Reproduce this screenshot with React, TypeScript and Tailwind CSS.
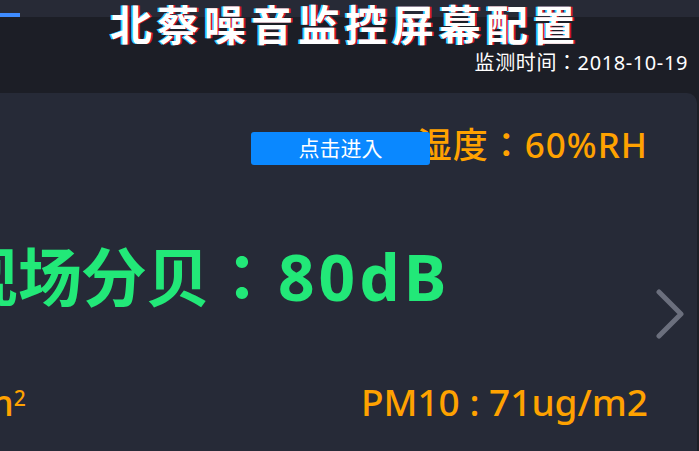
import { FC } from 'react';

const cjk = "font-['Noto_Sans','Noto_Sans_CJK_JP',sans-serif]";

const Chevron: FC = () => (
  <svg width="30" height="50" viewBox="0 0 30 50" fill="none">
    <path d="M4 3 L26 25 L4 47" stroke="#6b6f7d" strokeWidth="5" strokeLinecap="round" strokeLinejoin="round" />
  </svg>
);

export default function App() {
  return (
    <div className={`w-[699px] h-[451px] overflow-hidden bg-[#1c1e26] flex flex-col ${cjk}`}>
      {/* header */}
      <div className="relative h-[93px] shrink-0 bg-[linear-gradient(to_bottom,#272a36_17px,#1c1e26_17px)]">
        <div className="absolute left-0 top-[13px] h-[4px] w-[20px] bg-[#3f8cff]" />
        <div className="flex justify-center pr-[14px] pt-[4px]">
          <h1 className="text-[42px] leading-none font-bold text-white tracking-[5px] pl-[5px] [text-shadow:1.5px_0_#d0102a,-1.5px_0_#2ad0ff]">
            北蔡噪音监控屏幕配置
          </h1>
        </div>
        <div className="flex justify-end pr-[11px] mt-[7px]">
          <span className="text-[20px] leading-none text-white tracking-[0.6px]">监测时间：2018-10-19</span>
        </div>
      </div>

      {/* card */}
      <div className="relative flex-1 ml-[-260px] mr-[2px] rounded-tr-[10px] bg-[#262a37] flex flex-col">
        <div className="flex justify-end pr-[49px] pt-[34px] h-[80px]">
          <span className="text-[35px] leading-none font-medium text-[#ffa200] tracking-[1px]">湿度：60%RH</span>
        </div>
        <button className="absolute left-[511px] top-[39px] w-[179px] h-[33px] rounded-[3px] bg-[#0a88ff] text-white text-[21px] leading-none">
          点击进入
        </button>

        <div className="flex items-center pl-[214px] mt-[74px] h-[60px]">
          <span className="text-[64px] leading-none font-bold text-[#22e878] whitespace-nowrap">
            现场分贝：<span className="tracking-[4px] ml-[4px]">80dB</span>
          </span>
        </div>

        <div className="absolute right-[12px] top-[196px]">
          <Chevron />
        </div>

        <div className="flex justify-between items-center pr-[49px] mt-[76px]">
          <span className="text-[37px] leading-none font-medium text-[#ffa200] whitespace-nowrap ml-[-10px]">
            PM2.5：45ug/m<sup className="text-[21px]">2</sup>
          </span>
          <span className="text-[37px] leading-none font-medium text-[#ffa200] whitespace-nowrap">PM10 : 71ug/m2</span>
        </div>
      </div>
    </div>
  );
}
